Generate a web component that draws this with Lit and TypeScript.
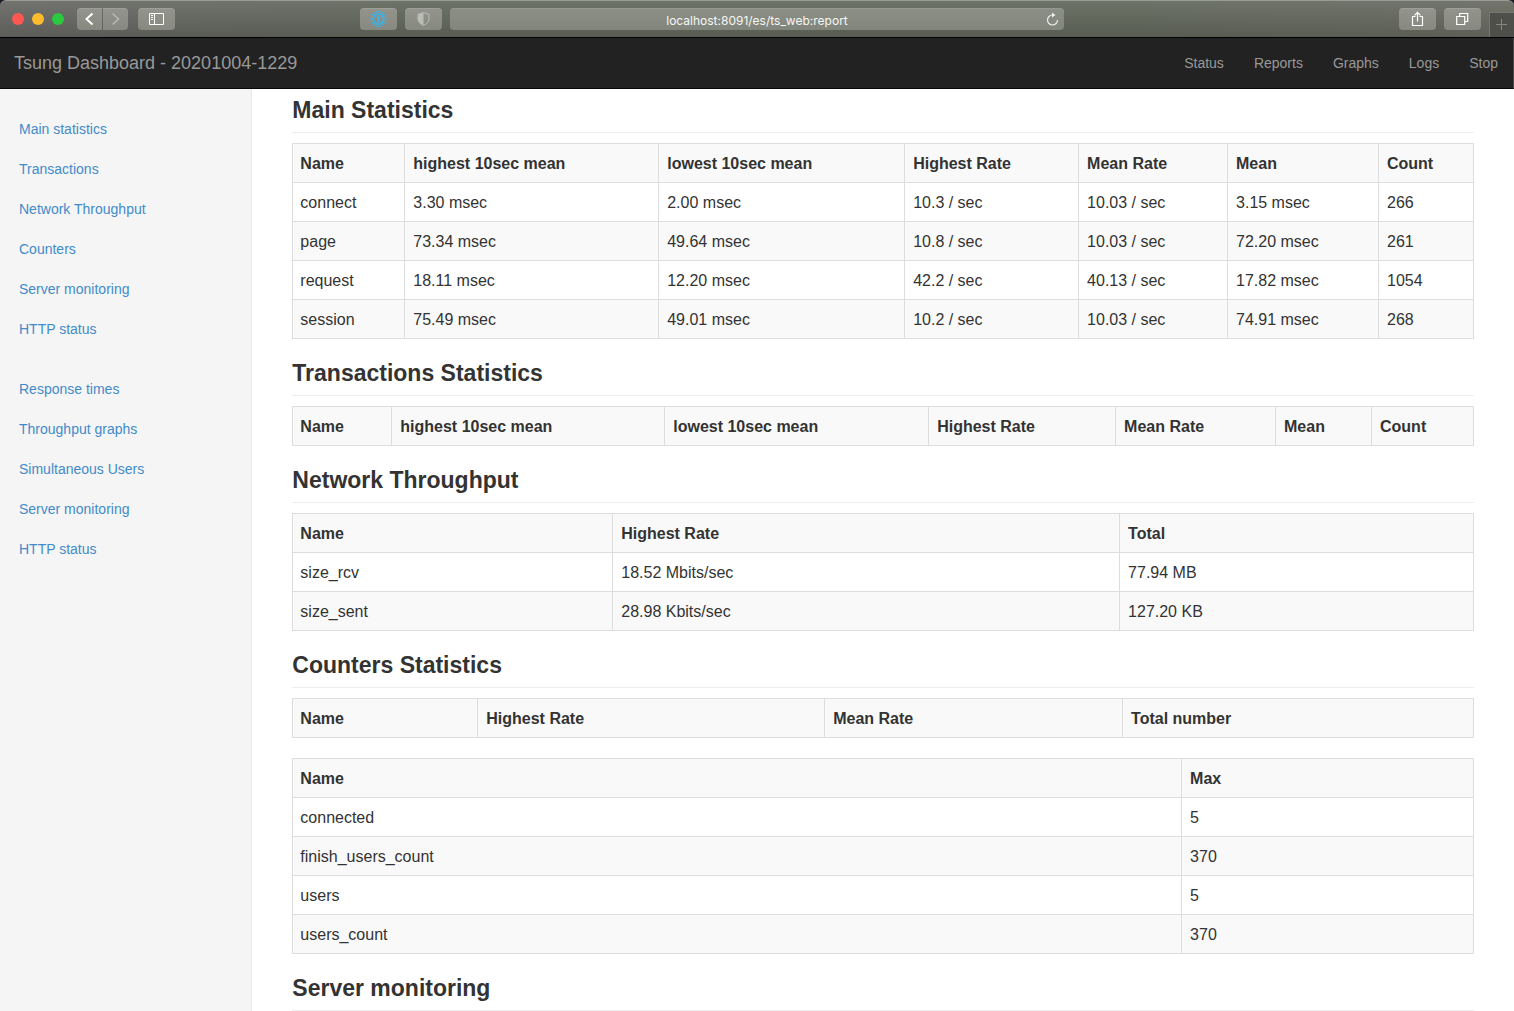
import { LitElement, html, css } from "lit";
import { customElement, property } from "lit/decorators.js";

interface TableData {
  widths: number[];
  head: string[];
  rows: string[][];
}

interface Section {
  title: string;
  tables: TableData[];
}

const STAT_HEAD = [
  "Name",
  "highest 10sec mean",
  "lowest 10sec mean",
  "Highest Rate",
  "Mean Rate",
  "Mean",
  "Count",
];

const SECTIONS: Section[] = [
  {
    title: "Main Statistics",
    tables: [
      {
        widths: [112, 254, 246, 174, 149, 151, 95],
        head: STAT_HEAD,
        rows: [
          ["connect", "3.30 msec", "2.00 msec", "10.3 / sec", "10.03 / sec", "3.15 msec", "266"],
          ["page", "73.34 msec", "49.64 msec", "10.8 / sec", "10.03 / sec", "72.20 msec", "261"],
          ["request", "18.11 msec", "12.20 msec", "42.2 / sec", "40.13 / sec", "17.82 msec", "1054"],
          ["session", "75.49 msec", "49.01 msec", "10.2 / sec", "10.03 / sec", "74.91 msec", "268"],
        ],
      },
    ],
  },
  {
    title: "Transactions Statistics",
    tables: [{ widths: [99, 273, 264, 187, 160, 96, 102], head: STAT_HEAD, rows: [] }],
  },
  {
    title: "Network Throughput",
    tables: [
      {
        widths: [320, 507, 354],
        head: ["Name", "Highest Rate", "Total"],
        rows: [
          ["size_rcv", "18.52 Mbits/sec", "77.94 MB"],
          ["size_sent", "28.98 Kbits/sec", "127.20 KB"],
        ],
      },
    ],
  },
  {
    title: "Counters Statistics",
    tables: [
      {
        widths: [185, 347, 298, 351],
        head: ["Name", "Highest Rate", "Mean Rate", "Total number"],
        rows: [],
      },
      {
        widths: [889, 292],
        head: ["Name", "Max"],
        rows: [
          ["connected", "5"],
          ["finish_users_count", "370"],
          ["users", "5"],
          ["users_count", "370"],
        ],
      },
    ],
  },
  { title: "Server monitoring", tables: [] },
];

const SIDE_GROUPS: string[][] = [
  ["Main statistics", "Transactions", "Network Throughput", "Counters", "Server monitoring", "HTTP status"],
  ["Response times", "Throughput graphs", "Simultaneous Users", "Server monitoring", "HTTP status"],
];

const NAV = ["Status", "Reports", "Graphs", "Logs", "Stop"];

@customElement("browser-toolbar")
export class BrowserToolbar extends LitElement {
  static styles = css`
    :host {
      display: block;
      flex: none;
      background: #1a1a22;
    }
    .bar {
      display: grid;
      grid-template-columns: 348px minmax(0, 1fr) 450px;
      height: 38px;
      box-sizing: border-box;
      border-top: 1px solid #999c94;
      border-bottom: 1px solid #000;
      border-radius: 6px 6px 0 0;
      background:
        linear-gradient(rgba(255, 255, 255, 0.05), rgba(0, 0, 0, 0.14)),
        linear-gradient(90deg, #6b6b68, #666b5f 28%, #666b5f 75%, #6c6e65);
    }
    .left,
    .center,
    .right {
      display: flex;
      align-items: flex-start;
      padding-top: 7px;
    }
    .left {
      padding-left: 12px;
    }
    .lights {
      display: flex;
      gap: 8px;
      padding: 5px 13px 0 0;
    }
    .light {
      width: 12px;
      height: 12px;
      padding: 0;
      border: 0;
      border-radius: 50%;
    }
    .close {
      background: #fc5753;
    }
    .minimise {
      background: #fdbc2e;
    }
    .zoom {
      background: #2ac940;
    }
    .tool {
      display: flex;
      align-items: center;
      justify-content: center;
      width: 37px;
      height: 22px;
      padding: 0;
      border: 0;
      border-radius: 4px;
      background: linear-gradient(#93958d, #878980);
      box-shadow: inset 0 1px 0 rgba(255, 255, 255, 0.1);
      color: #fff;
    }
    .narrow {
      width: 25px;
    }
    .back {
      border-radius: 4px 0 0 4px;
      margin-right: 1px;
    }
    .next {
      border-radius: 0 4px 4px 0;
      margin-right: 10px;
      color: #b9bab6;
    }
    svg {
      display: block;
    }
    .center {
      gap: 8px;
      padding-left: 12px;
    }
    .address {
      display: flex;
      flex: 1;
      align-items: center;
      height: 22px;
      padding-right: 5px;
      border-radius: 4px;
      background: linear-gradient(#8b8f85, #82857c);
      box-shadow: inset 0 1px 0 rgba(255, 255, 255, 0.08);
      color: #f6f7f5;
    }
    .url {
      flex: 1;
      min-width: 0;
      height: 22px;
      padding: 2px 0 0 18px;
      box-sizing: border-box;
      border: 0;
      background: none;
      color: inherit;
      font: 12px/20px Inter, sans-serif;
      text-align: center;
    }
    .reload {
      padding: 0;
      border: 0;
      background: none;
      color: #eceeea;
    }
    .right {
      justify-content: flex-end;
      gap: 8px;
    }
    .newtab {
      display: flex;
      align-items: center;
      justify-content: center;
      width: 25px;
      height: 25px;
      margin-top: 4px;
      padding: 0;
      border: 0;
      border-top: 1px solid #757770;
      border-left: 1px solid #757770;
      background: #4e4f4a;
      color: #858681;
    }
    .shield {
      color: #b9bdb4;
    }
    .key {
      color: #36b4ec;
    }
  `;

  render() {
    return html`
      <div class="bar">
        <div class="left">
          <div class="lights">
            <button class="light close" aria-label="Close"></button>
            <button class="light minimise" aria-label="Minimise"></button>
            <button class="light zoom" aria-label="Zoom"></button>
          </div>
          <button class="tool narrow back" aria-label="Back">
            <svg width="11" height="14" viewBox="0 0 11 14" fill="none" stroke="currentColor" stroke-width="2">
              <path d="M8.500 1.500 2.500 7l6 5.500" />
            </svg>
          </button>
          <button class="tool narrow next" aria-label="Forward">
            <svg width="11" height="14" viewBox="0 0 11 14" fill="none" stroke="currentColor" stroke-width="1.6">
              <path d="M2.500 1.500 8.500 7l-6 5.500" />
            </svg>
          </button>
          <button class="tool" aria-label="Sidebar">
            <svg width="15" height="12" viewBox="0 0 15 12" fill="none" stroke="currentColor">
              <path d="M.5.5h14v11H.5zM5.500.5v11M2 2.500h2M2 4.500h2M2 6.500h2" />
            </svg>
          </button>
        </div>
        <div class="center">
          <button class="tool key" aria-label="Passwords">
            <svg width="17" height="16" viewBox="0 0 17 16" fill="none" stroke="currentColor">
              <circle cx="8.5" cy="8" r="7.5" />
              <circle cx="8.5" cy="8" r="5.2" stroke-width="1.8" />
              <path d="M8.500 5v6" stroke-width="2" />
            </svg>
          </button>
          <button class="tool shield" aria-label="Privacy report">
            <svg width="13" height="14" viewBox="0 0 13 14">
              <path d="M6.500.6 12 2.300v4.500c0 3-2.200 5.200-5.500 6.700C3.200 12 1 9.800 1 6.800V2.300z" fill="none" stroke="currentColor" />
              <path d="M6.500.6v12.900C3.200 12 1 9.800 1 6.800V2.300z" fill="currentColor" />
            </svg>
          </button>
          <div class="address">
            <input class="url" aria-label="Address" value="localhost:8091/es/ts_web:report" />
            <button class="reload" aria-label="Reload">
              <svg width="13" height="14" viewBox="0 0 13 14" fill="none" stroke="currentColor" stroke-width="1.2">
                <path d="M6.500 3A5 5 0 1 0 11.500 8" />
                <path d="M6 .5 9.500 3 6 5.500z" fill="currentColor" stroke="none" />
              </svg>
            </button>
          </div>
        </div>
        <div class="right">
          <button class="tool" aria-label="Share">
            <svg width="13" height="16" viewBox="0 0 13 16" fill="none" stroke="currentColor">
              <path d="M4.500 5.500H1.500v9h10v-9h-3M6.500 10.500V1.500M3.500 4.300l3-3 3 3" stroke-width="1.2" />
            </svg>
          </button>
          <button class="tool" aria-label="Tabs">
            <svg width="13" height="14" viewBox="0 0 13 14" fill="none" stroke="currentColor">
              <path d="M.7 4.500h8v8h-8zM3.700 4V1.500h8v8H9.200" stroke-width="1.2" />
            </svg>
          </button>
          <button class="newtab" aria-label="New tab">
            <svg width="12" height="12" viewBox="0 0 12 12" fill="none" stroke="currentColor">
              <path d="M5.500 0v11M0 5.500h11" />
            </svg>
          </button>
        </div>
      </div>
    `;
  }
}

@customElement("stat-table")
export class StatTable extends LitElement {
  @property({ attribute: false }) data!: TableData;

  static styles = css`
    :host {
      display: block;
      margin-bottom: 20px;
    }
    .table {
      width: 100%;
      table-layout: fixed;
      border-collapse: collapse;
      border: 1px solid #ddd;
    }
    .cell {
      padding: 9px 7px 7px 8px;
      border: 1px solid #ddd;
      text-align: left;
      font-size: 16px;
      line-height: 22px;
    }
    .cell:first-child {
      padding-left: 7px;
    }
    .row:nth-child(even) {
      background: #f9f9f9;
    }
    .head {
      background: #f9f9f9;
    }
  `;

  render() {
    const { widths, head, rows } = this.data;
    const total = widths.reduce((a, b) => a + b, 0);
    return html`
      <table class="table">
        <colgroup>
          ${widths.map((w) => html`<col style="width:${(w / total) * 100}%" />`)}
        </colgroup>
        <thead>
          <tr class="head">
            ${head.map((h) => html`<th class="cell" scope="col">${h}</th>`)}
          </tr>
        </thead>
        <tbody>
          ${rows.map(
            (r) => html`<tr class="row">
              ${r.map((c) => html`<td class="cell">${c}</td>`)}
            </tr>`
          )}
        </tbody>
      </table>
    `;
  }
}

@customElement("app-root")
export class AppRoot extends LitElement {
  static styles = css`
    :host {
      display: flex;
      flex-direction: column;
      height: 100vh;
      overflow: hidden;
      background: #fff;
      color: #333;
      font-family: "Liberation Sans", Arial, sans-serif;
    }
    .navbar {
      display: flex;
      flex: none;
      align-items: center;
      justify-content: space-between;
      height: 50px;
      border-right: 1px solid #4a4a4a;
      border-bottom: 1px solid #080808;
      background: #222;
    }
    .brand {
      padding-left: 14px;
      font-size: 18px;
      line-height: 20px;
      color: #999;
      text-decoration: none;
    }
    .links {
      display: flex;
      gap: 30px;
      padding-right: 15px;
    }
    .nav-link {
      font-size: 14px;
      line-height: 20px;
      color: #999;
      text-decoration: none;
    }
    .page {
      display: grid;
      flex: 1;
      min-height: 0;
      grid-template-columns: minmax(0, 1fr) minmax(0, 5fr);
    }
    .sidebar {
      padding-top: 20px;
      border-right: 1px solid #e8e8e8;
      background: #f5f5f5;
    }
    .group {
      margin: 0 0 20px;
      padding: 0;
      list-style: none;
    }
    .side-link {
      display: block;
      padding: 10px 19px;
      font-size: 14px;
      line-height: 20px;
      color: #428bca;
      text-decoration: none;
    }
    .main {
      min-height: 0;
      overflow: hidden;
      padding: 7px 40px 0;
    }
    .title {
      margin: 0 0 10px;
      padding-bottom: 7px;
      border-bottom: 1px solid #eee;
      font-size: 23px;
      font-weight: 700;
      line-height: 29px;
    }
  `;

  render() {
    return html`
      <browser-toolbar></browser-toolbar>
      <nav class="navbar">
        <a class="brand" href="#">Tsung Dashboard - 20201004-1229</a>
        <div class="links">
          ${NAV.map((n) => html`<a class="nav-link" href="#">${n}</a>`)}
        </div>
      </nav>
      <div class="page">
        <aside class="sidebar">
          ${SIDE_GROUPS.map(
            (g) => html`<ul class="group">
              ${g.map((l) => html`<li><a class="side-link" href="#">${l}</a></li>`)}
            </ul>`
          )}
        </aside>
        <main class="main">
          ${SECTIONS.map(
            (s) => html`<section>
              <h3 class="title">${s.title}</h3>
              ${s.tables.map((t) => html`<stat-table .data=${t}></stat-table>`)}
            </section>`
          )}
        </main>
      </div>
    `;
  }
}
